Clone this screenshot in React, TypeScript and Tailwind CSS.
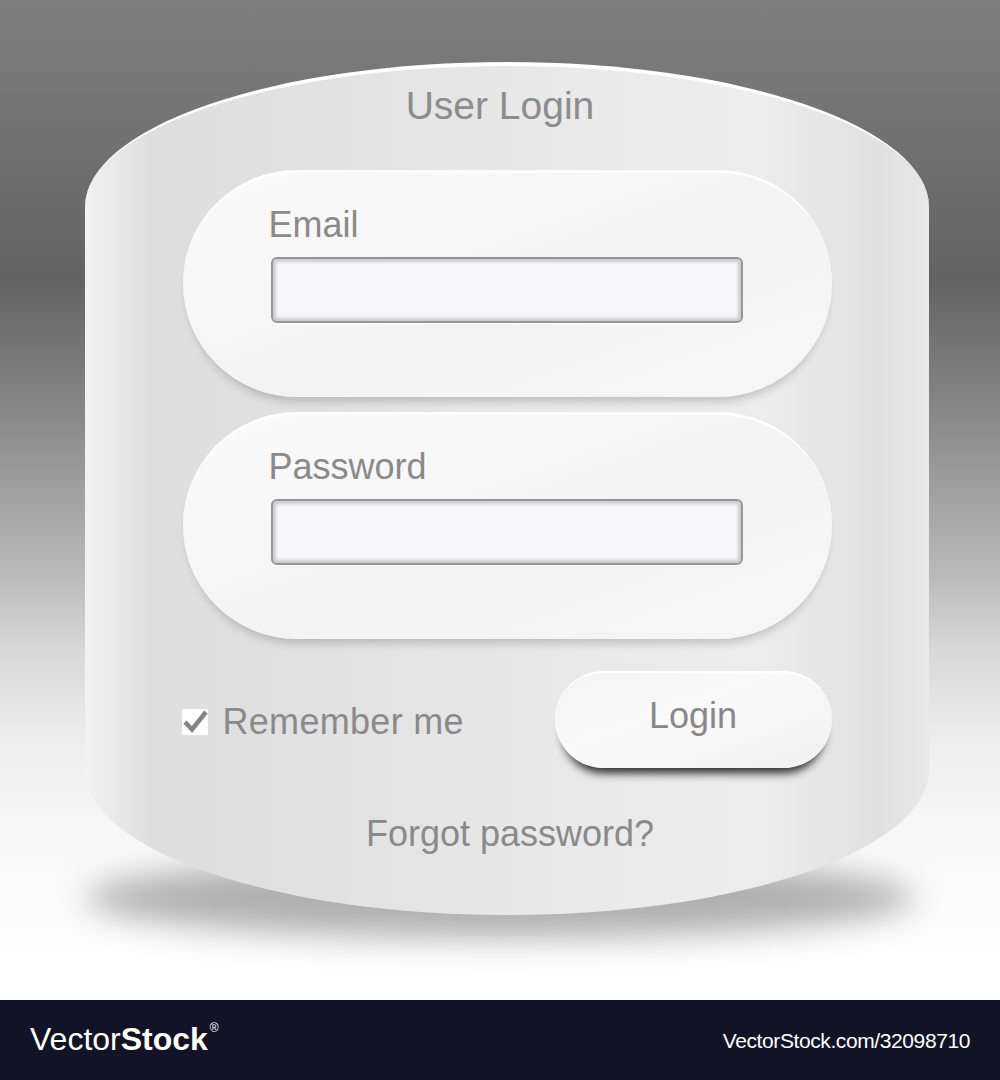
import React from "react";

const font = { fontFamily: '"Liberation Sans", Arial, sans-serif' };

function Field({ label }: { label: string }) {
  return (
    <div className="w-[649px] h-[227px] rounded-full border-t-[3px] border-white bg-[linear-gradient(160deg,#fbfbfb_0%,#f3f3f3_55%,#f7f7f7_100%)] shadow-[0_9px_10px_-5px_rgba(0,0,0,0.2)] pt-[31px] pl-[86px] flex flex-col">
      <div className="text-[36px] leading-[42px] text-[#8a8a8a]">{label}</div>
      <div className="mt-[11px] ml-[2px] w-[472px] h-[66px] rounded-[6px] border-2 border-[#969696] bg-[#f6f6f8] shadow-[inset_0_0_3px_3px_rgba(0,0,0,0.17),0_1px_0_#ffffff]" />
    </div>
  );
}

export default function App() {
  return (
    <div className="w-[1000px] h-[1080px] flex flex-col overflow-hidden" style={font}>
      <div className="relative h-[1000px] bg-[linear-gradient(to_bottom,#7f7f7f_0%,#636363_28%,#8a8a8a_42%,#b8b8b8_57%,#d8d8d8_65%,#efefef_75%,#fbfbfb_88%,#ffffff_100%)] pt-[62px] pl-[85px]">
        <div className="absolute left-[85px] top-[858px] w-[830px] h-[80px] rounded-[50%] bg-[rgba(0,0,0,0.3)] blur-[16px]" />
        <div className="relative w-[844px] h-[853px] rounded-[50%/145px] border-t-4 border-white bg-[linear-gradient(to_right,#f2f2f2_0%,#dedede_8%,#e2e2e2_30%,#eaeaea_60%,#ededed_80%,#e0e0e0_94%,#e8e8e8_100%)] pt-[18px] flex flex-col items-center">
          <div className="text-[39px] leading-[44px] text-[#8c8c8c] pr-[14px]">User Login</div>
          <div className="mt-[42px] flex flex-col gap-[15px]">
            <Field label="Email" />
            <Field label="Password" />
          </div>
          <div className="mt-[32px] w-[649px] flex items-center justify-between">
            <div className="flex items-center gap-[15px] mt-[4px] -ml-[1px]">
              <div className="w-[26px] h-[26px] bg-white">
                <svg width="26" height="26" viewBox="0 0 26 26" className="overflow-visible">
                  <polyline points="3,13 10,20.5 24,3" fill="none" stroke="#858585" strokeWidth="4.5" strokeLinecap="butt" strokeLinejoin="miter" />
                </svg>
              </div>
              <div className="text-[36px] leading-[42px] text-[#8a8a8a] tracking-[0.3px]">Remember me</div>
            </div>
            <div className="w-[277px] h-[97px] rounded-full border-t-2 border-white bg-[linear-gradient(160deg,#f3f3f3_0%,#fafafa_40%,#f0f0f0_100%)] shadow-[0_13px_10px_-8px_rgba(0,0,0,0.85)] flex items-center justify-center pb-[9px]">
              <span className="text-[36px] leading-[42px] text-[#888888]">Login</span>
            </div>
          </div>
          <div className="mt-[45px] text-[36px] leading-[42px] text-[#8a8a8a] pl-[6px]">Forgot password?</div>
        </div>
      </div>
      <div className="h-[80px] bg-[#121326] flex items-center justify-between pl-[30px] pr-[30px]">
        <div className="flex items-start text-white text-[32px] leading-none pb-[2px]">
          <span className="font-light">Vector</span>
          <span className="font-bold">Stock</span>
          <span className="text-[12px] ml-[2px] -mt-[1px]">®</span>
        </div>
        <div className="text-white text-[21px] leading-none tracking-[-0.4px]">VectorStock.com/32098710</div>
      </div>
    </div>
  );
}
